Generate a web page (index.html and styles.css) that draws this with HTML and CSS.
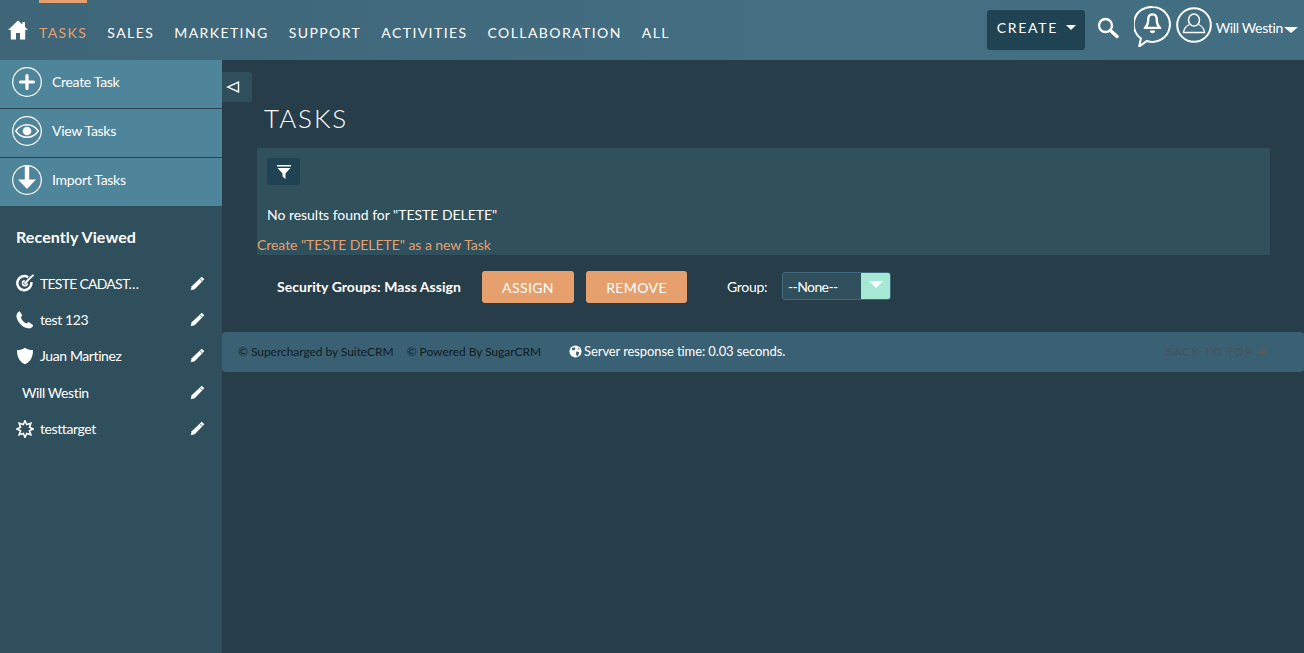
FILE: index.html
```html
<!DOCTYPE html>
<html>
<head>
    <meta charset="utf-8">
    <title>SuiteCRM - Tasks</title>
    <link rel="stylesheet" href="styles.css">
</head>
<body>
    <nav class="topnav">
        <svg class="home" viewBox="0 0 20 20"><path d="M10 .5 0 10h2.800v9.500h5.200v-6.500h4v6.500h5.200V10H20l-3-2.900V2h-2.600v2.600z" fill="#fff"/></svg>
        <div class="tab-marker-wrap"><a class="tab current">TASKS</a></div>
        <a class="tab">SALES</a>
        <a class="tab">MARKETING</a>
        <a class="tab">SUPPORT</a>
        <a class="tab">ACTIVITIES</a>
        <a class="tab">COLLABORATION</a>
        <a class="tab">ALL</a>
        <div class="nav-right">
            <div class="create-btn">CREATE<span class="caret"></span></div>
            <svg class="search" viewBox="0 0 22 22"><circle cx="8.500" cy="8.500" r="6.500" fill="none" stroke="#fff" stroke-width="2.400"/><path d="M13.500 13.500 20 19.500" stroke="#fff" stroke-width="3.400" stroke-linecap="round"/></svg>
            <svg class="bell" viewBox="0 0 36 40"><path d="M18 1a17 17 0 1 1-5.500 33.100L5 39.500l1.700-7.800A17 17 0 0 1 18 1z" fill="none" stroke="#fff" stroke-width="2"/><path d="M18 7c3.700 0 5.300 2.800 5.300 5.800 0 3.700 1 6.200 3.200 8.200v1.500h-17V21c2.200-2 3.200-4.500 3.200-8.200C12.700 9.800 14.300 7 18 7zm0 2.300c-2.200 0-3 1.700-3 3.500 0 3-.6 5.200-1.700 7.400h9.400c-1.100-2.200-1.700-4.400-1.700-7.400 0-1.800-.8-3.500-3-3.500z" fill="#fff"/><path d="M15.500 24h5a2.500 2.500 0 0 1-5 0z" fill="#fff"/></svg>
            <svg class="avatar" viewBox="0 0 36 36"><circle cx="18" cy="18" r="16.800" fill="none" stroke="#fff" stroke-width="2"/><ellipse cx="18" cy="13" rx="5.500" ry="6" fill="none" stroke="#fff" stroke-width="1.500"/><path d="M13.500 17.500C10 19 8 21.500 7.500 25.500h21c-.5-4-2.500-6.500-6-8" fill="none" stroke="#fff" stroke-width="1.300"/></svg>
            <div class="user">Will Westin<span class="caret wide"></span></div>
        </div>
    </nav>

    <div class="page">
        <aside class="sidebar">
            <ul class="actions">
                <li>
                    <svg class="action-icon" viewBox="0 0 30 30"><circle cx="15" cy="15" r="14.300" fill="none" stroke="#fff" stroke-width="1.200"/><path d="M15 8.500v13M8.500 15h13" stroke="#fff" stroke-width="3.200" stroke-linecap="round"/></svg>
                    Create Task
                </li>
                <li>
                    <svg class="action-icon" viewBox="0 0 30 30"><circle cx="15" cy="15" r="14.300" fill="none" stroke="#fff" stroke-width="1.200"/><path d="M3.800 15C6.500 10.800 10.500 8.700 15 8.700s8.500 2.100 11.200 6.300c-2.700 4.200-6.700 6.300-11.200 6.300S6.500 19.200 3.800 15z" fill="none" stroke="#fff" stroke-width="1.400"/><circle cx="15" cy="15" r="4.300" fill="#fff"/></svg>
                    View Tasks
                </li>
                <li>
                    <svg class="action-icon" viewBox="0 0 30 30"><circle cx="15" cy="15" r="14.300" fill="none" stroke="#fff" stroke-width="1.200"/><path d="M12.800 0h4.400v14.500H24L15 24 6 14.500h6.800z" fill="#fff"/></svg>
                    Import Tasks
                </li>
            </ul>
            <h2 class="recent-title">Recently Viewed</h2>
            <ul class="recent">
                <li>
                    <svg class="recent-icon" viewBox="0 0 20 20"><path d="M13.500 3.600A7.800 7.800 0 1 0 17 9" fill="none" stroke="#fff" stroke-width="2.800"/><path d="M9.800 7.500A2.700 2.700 0 1 0 12.600 10.500" fill="none" stroke="#fff" stroke-width="1.800"/><path d="M9.500 10.800 16.500 3.500 19.500 1" fill="none" stroke="#fff" stroke-width="2.200"/></svg>
                    <span class="recent-name cut">TESTE CADAST…</span>
                    <svg class="pencil" viewBox="0 0 16 16"><path d="M12.500.7 15.300 3.500 5 14 .7 15.300 1.800 11z" fill="#fff"/><path d="M10.500 2.700l2.800 2.800" stroke="#2f4f5c" stroke-width=".8"/></svg>
                </li>
                <li>
                    <svg class="recent-icon" viewBox="0 0 20 20"><path d="M4.300.5 7 4.800 5.400 7.200c.8 2.800 3.300 5.500 6.200 6.600l2.400-1.600 4.800 3.300c.4.500.3 1-.1 1.500-1.400 1.900-3 2.800-5 2.300C8 18.800 2.300 13.200.6 7.200.1 5 .8 2.600 2.800.9c.5-.4 1-.6 1.500-.4z" fill="#fff"/></svg>
                    <span class="recent-name">test 123</span>
                    <svg class="pencil" viewBox="0 0 16 16"><path d="M12.500.7 15.300 3.500 5 14 .7 15.300 1.800 11z" fill="#fff"/><path d="M10.500 2.700l2.800 2.800" stroke="#2f4f5c" stroke-width=".8"/></svg>
                </li>
                <li>
                    <svg class="recent-icon" viewBox="0 0 20 20"><path d="M10 .8c2.300 1.700 5.300 2.600 8.800 2.600.3 7.500-2.600 13.300-8.800 15.800C3.800 16.700.9 10.900 1.200 3.400 4.700 3.400 7.700 2.500 10 .8z" fill="#fff"/></svg>
                    <span class="recent-name">Juan Martinez</span>
                    <svg class="pencil" viewBox="0 0 16 16"><path d="M12.500.7 15.300 3.500 5 14 .7 15.300 1.800 11z" fill="#fff"/><path d="M10.500 2.700l2.800 2.800" stroke="#2f4f5c" stroke-width=".8"/></svg>
                </li>
                <li class="no-icon">
                    <span class="recent-name">Will Westin</span>
                    <svg class="pencil" viewBox="0 0 16 16"><path d="M12.500.7 15.300 3.500 5 14 .7 15.300 1.800 11z" fill="#fff"/><path d="M10.500 2.700l2.800 2.800" stroke="#2f4f5c" stroke-width=".8"/></svg>
                </li>
                <li>
                    <svg class="recent-icon star" viewBox="0 0 20 20"><path d="M10 .8 11.900 5 16.500 3.500 15 8.100 19.200 10 15 11.900 16.500 16.500 11.900 15 10 19.200 8.100 15 3.500 16.500 5 11.900 .8 10 5 8.100 3.500 3.500 8.100 5z" fill="none" stroke="#fff" stroke-width="1.800" stroke-miterlimit="10"/></svg>
                    <span class="recent-name">testtarget</span>
                    <svg class="pencil" viewBox="0 0 16 16"><path d="M12.500.7 15.300 3.500 5 14 .7 15.300 1.800 11z" fill="#fff"/><path d="M10.500 2.700l2.800 2.800" stroke="#2f4f5c" stroke-width=".8"/></svg>
                </li>
            </ul>
        </aside>

        <main class="content">
            <div class="collapse"><svg viewBox="0 0 14 14"><path d="M12.500 2v10L1.500 7z" fill="none" stroke="#fff" stroke-width="1.400"/></svg></div>
            <h1>TASKS</h1>
            <section class="results">
                <div class="filter-btn"><svg viewBox="0 0 14 14"><path d="M0 0h14v1.600H0zM.5 3h13L8.500 8.500V14L5.500 11.500v-3z" fill="#fff"/></svg></div>
                <p class="no-results">No results found for "TESTE DELETE"</p>
                <a class="create-link">Create "TESTE DELETE" as a new Task</a>
            </section>
            <div class="mass-assign">
                <b>Security Groups: Mass Assign</b>
                <button class="btn assign">ASSIGN</button>
                <button class="btn remove">REMOVE</button>
                <span class="group-label">Group:</span>
                <div class="select">
                    <span class="select-value">--None--</span>
                    <span class="select-arrow"></span>
                </div>
            </div>
            <footer class="footer">
                <span class="copy first">&copy; Supercharged by SuiteCRM</span>
                <span class="copy">&copy; Powered By SugarCRM</span>
                <span class="server">
                    <svg class="globe" viewBox="0 0 14 14"><circle cx="7" cy="7" r="6.500" fill="#fff"/><path d="M3 3.500 6 2.500 7 4 5.500 6 3.500 5.500zM8 7l3 .5-1 3.500-1.500 1.500-1-3zM10 2.500l1.500 2-1.500.3z" fill="#3a6073"/></svg>
                    Server response time: 0.03 seconds.
                </span>
                <span class="back-top">BACK TO TOP<span class="up"></span></span>
            </footer>
        </main>
    </div>
</body>
</html>
```

FILE: styles.css
```css
* {box-sizing:border-box;}
html,body {height:100%;}
body {margin:0;font-family:"Lato",sans-serif;font-size:14px;color:#fff;background:#273d4a;overflow:hidden;}
ul {list-style:none;margin:0;padding:0;}

.topnav {height:60px;display:flex;align-items:center;padding-left:8px;background:linear-gradient(90deg,#3e6578,#446e82 60%,#436d81);}
.home {width:20px;height:20px;margin-right:11px;flex:none;}
.tab {font-size:14px;letter-spacing:1.420px;margin-right:20px;margin-top:6px;line-height:20px;}
.tab-marker-wrap {position:relative;display:flex;}
.tab-marker-wrap::before {content:"";position:absolute;left:0;right:20px;top:-17px;height:3px;background:#e6a06e;}
.tab.current {color:#e6a06e;}
.nav-right {margin-left:auto;display:flex;align-items:center;}
.create-btn {width:98px;height:40px;background:#1f4352;border-radius:3px;display:flex;align-items:center;padding-left:10px;font-size:14px;letter-spacing:1.7px;padding-bottom:5px;}
.caret {display:inline-block;width:0;height:0;border:5.500px solid transparent;border-top:5.500px solid #fff;border-bottom:0;margin-left:8px;}
.caret.wide {border-width:6px 7.500px 0;margin-left:1px;}
.search {width:22px;height:22px;margin-left:12px;margin-bottom:4px;}
.bell {width:37px;height:41px;margin-left:15px;margin-top:-7px;}
.avatar {width:36px;height:36px;margin-left:5px;margin-top:-11px;}
.user {font-size:14px;margin-left:4px;margin-right:6px;margin-bottom:6px;letter-spacing:-.35px;white-space:nowrap;}

.page {display:flex;height:593px;}
.sidebar {width:222px;flex:none;background:#2f4f5c;}
.actions li {height:49px;background:#4f859b;border-bottom:1px solid #2a4552;display:flex;align-items:center;padding-left:12px;padding-bottom:5px;gap:10px;font-size:14px;letter-spacing:-.3px;}
.actions li:last-child {border-bottom:0;height:48px;}
.action-icon {width:30px;height:30px;flex:none;}
.recent-title {font-size:16px;font-weight:700;letter-spacing:.1px;margin:21px 0 18px 16px;line-height:20px;}
.recent li {height:36.400px;display:flex;align-items:center;padding-left:16px;padding-right:17px;letter-spacing:-.4px;}
.recent li.no-icon {padding-left:22px;}
.recent-icon {width:18px;height:18px;flex:none;margin-right:6px;}
.recent-name {flex:1;}
.recent-name.cut {letter-spacing:-.75px;}
.pencil {width:15px;height:15px;flex:none;}

.content {flex:1;position:relative;min-width:0;}
.collapse {position:absolute;left:0;top:12px;width:30px;height:30px;background:#2f4f5c;border-radius:0 3px 3px 0;display:flex;align-items:center;padding-left:4px;}
.collapse svg {width:14px;height:14px;}
h1 {font-size:26px;font-weight:300;letter-spacing:1.900px;line-height:32px;margin:0;padding:42px 0 14px 42px;}
.results {margin-left:35px;margin-right:34px;height:107px;background:#30505c;padding-top:10px;}
.filter-btn {width:33px;height:27px;margin-left:10px;background:#1f4352;border-radius:3px;display:flex;align-items:center;justify-content:center;}
.filter-btn svg {width:14px;height:14px;}
.no-results {margin:21px 0 0 10px;line-height:17px;letter-spacing:-.03px;}
.create-link {display:block;color:#e6a06e;margin-top:13px;line-height:17px;letter-spacing:-.05px;}

.mass-assign {display:flex;align-items:center;height:32px;margin-top:16px;padding-left:55px;}
.mass-assign b {font-size:14px;letter-spacing:.05px;width:205px;margin-bottom:2px;}
.btn {height:32px;border:0;border-radius:3px;background:#e6a06e;color:#fff;font-family:inherit;font-size:14px;letter-spacing:.4px;padding:0;}
.assign {width:92px;margin-right:12px;}
.remove {width:101px;margin-right:40px;}
.group-label {width:55px;letter-spacing:-.3px;margin-bottom:2px;}
.select {width:109px;height:28px;margin-bottom:3px;border:1px solid #3f6a7d;border-radius:3px;background:#2f4f5c;display:flex;overflow:hidden;}
.select-value {flex:1;padding-left:5px;line-height:28px;letter-spacing:-.6px;}
.select-arrow {width:29px;background:#a5e8d4;position:relative;}
.select-arrow::after {content:"";position:absolute;left:8px;top:8px;border:7px solid transparent;border-top:7px solid #fff;border-bottom:0;}

.footer {margin-top:29px;height:40px;padding-bottom:2px;background:#3a6073;border-radius:4px;display:flex;align-items:center;padding-left:16px;font-size:12px;position:relative;color:#0f1d24;}
.copy {letter-spacing:-.05px;}
.copy.first {margin-right:13px;}
.server {margin-left:28px;color:#fff;font-size:13px;letter-spacing:-.1px;display:flex;align-items:center;gap:2px;}
.globe {width:13px;height:13px;}
.back-top {margin-left:auto;margin-right:36px;color:#44535b;font-size:12px;letter-spacing:1.050px;display:flex;align-items:center;gap:5px;}
.up {width:0;height:0;border:5.500px solid transparent;border-bottom:6px solid #5d5a5a;border-top:0;}
```
